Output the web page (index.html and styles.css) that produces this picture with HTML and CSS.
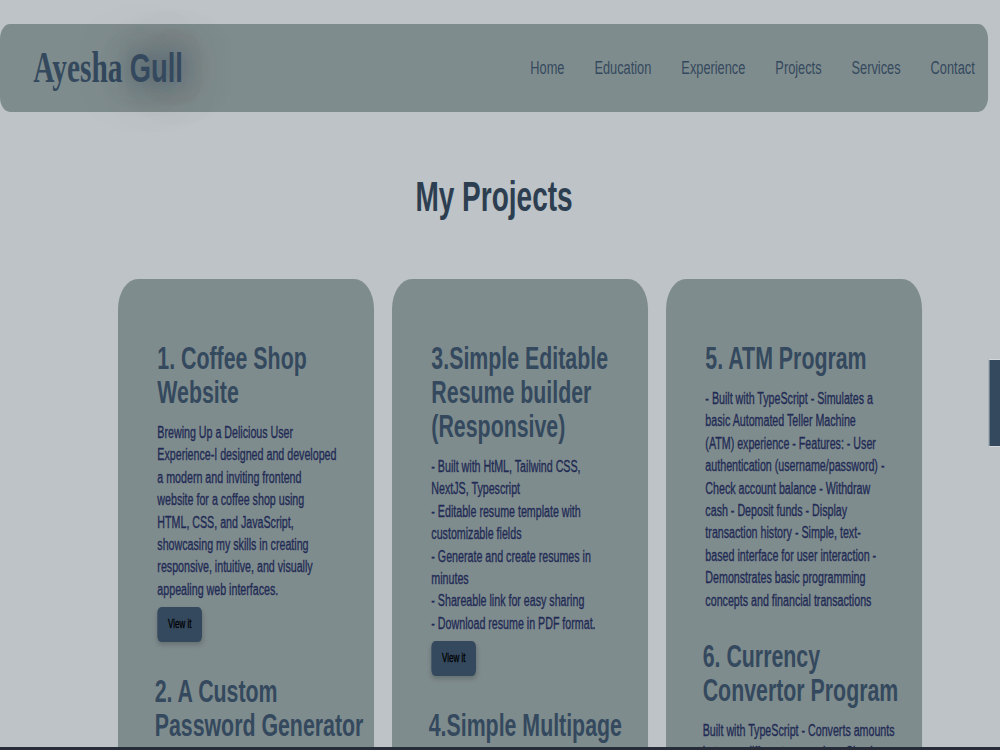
FILE: index.html
```html
<!DOCTYPE html>
<html lang="en">
<head>
    <meta charset="UTF-8">
    <meta name="viewport" content="width=device-width, initial-scale=1.0">
    <title>Ayesha Gull - Projects</title>
    <link rel="stylesheet" href="styles.css">
</head>
<body>
    <div class="page">
        <header class="navbar">
            <div class="logo">Ayesha <span class="logo-bold">Gull</span></div>
            <ul class="nav-links">
                <li><a href="#home">Home</a></li>
                <li><a href="#education">Education</a></li>
                <li><a href="#experience">Experience</a></li>
                <li><a href="#projects">Projects</a></li>
                <li><a href="#services">Services</a></li>
                <li><a href="#contact">Contact</a></li>
            </ul>
        </header>

        <section class="projects" id="projects">
            <h2>My Projects</h2>

            <div class="project-grid">
                <div class="card">
                    <div class="project">
                        <h3>1. Coffee Shop Website</h3>
                        <p>Brewing Up a Delicious User Experience-I designed and developed a modern and inviting frontend website for a coffee shop using HTML, CSS, and JavaScript, showcasing my skills in creating responsive, intuitive, and visually appealing web interfaces.</p>
                        <button class="view-btn">View it</button>
                    </div>
                    <div class="project wide">
                        <h3>2. A Custom Password Generator</h3>
                        <p>Built with TypeScript - Generates strong random passwords - Choose length and character types - Copy to clipboard with one click.</p>
                        <button class="view-btn">View it</button>
                    </div>
                </div>

                <div class="card">
                    <div class="project">
                        <h3>3.Simple Editable Resume builder (Responsive)</h3>
                        <p>- Built with HtML, Tailwind CSS, NextJS, Typescript<br>
                        - Editable resume template with customizable fields<br>
                        - Generate and create resumes in minutes<br>
                        - Shareable link for easy sharing<br>
                        - Download resume in PDF format.</p>
                        <button class="view-btn">View it</button>
                    </div>
                    <div class="project wide">
                        <h3>4.Simple Multipage Navigation Website</h3>
                        <p>- Built with HTML and CSS<br>
                        - Multiple linked pages with a shared navbar</p>
                        <button class="view-btn">View it</button>
                    </div>
                </div>

                <div class="card">
                    <div class="project">
                        <h3>5. ATM Program</h3>
                        <p>- Built with TypeScript - Simulates a basic Automated Teller Machine (ATM) experience - Features: - User authentication (username/password) - Check account balance - Withdraw cash - Deposit funds - Display transaction history - Simple, text-based interface for user interaction - Demonstrates basic programming concepts and financial transactions</p>
                    </div>
                    <div class="project wide">
                        <h3>6. Currency Convertor Program</h3>
                        <p>Built with TypeScript - Converts amounts between different currencies - Simple command line interface.</p>
                    </div>
                </div>
            </div>
        </section>

        <div class="scroll-thumb"></div>
    </div>
    <div class="bottom-bar"></div>
</body>
</html>
```

FILE: styles.css
```css
html, body {
    margin: 0;
    height: 100%;
    overflow: hidden;
}
body {
    background-color: #bdc3c7;
    font-family: "Liberation Sans", Arial, sans-serif;
}
.page {
    position: relative;
    width: 1482px;
    padding: 24px 18px 0 0;
    transform: scaleX(0.6667);
    transform-origin: 0 0;
}
.navbar {
    height: 88px;
    padding: 0 20px 0 50px;
    display: flex;
    justify-content: space-between;
    align-items: center;
    background-color: #7f8c8d;
    border-radius: 15px;
}
.logo {
    font-family: "Liberation Serif", "Times New Roman", serif;
    font-weight: bold;
    font-size: 44px;
    line-height: 48px;
    color: #34495e;
}
.logo-bold {
    font-family: "Liberation Sans", Arial, sans-serif;
    font-size: 41px;
    text-shadow: 0 0 30px rgba(44, 62, 80, 0.7), 0 0 60px rgba(44, 62, 80, 0.5);
}
.nav-links {
    display: flex;
    gap: 45px;
    list-style: none;
    margin: 0;
    padding: 0;
}
.nav-links a {
    color: #34495e;
    text-decoration: none;
    font-size: 19.2px;
}
.projects h2 {
    margin: 61px 0 58px;
    text-align: center;
    font-size: 42px;
    line-height: 48px;
    color: #2c3e50;
}
.project-grid {
    display: grid;
    grid-template-columns: repeat(3, 384px);
    gap: 27px;
    justify-content: center;
    padding-left: 78px;
}
.card {
    background-color: #7f8c8d;
    border-radius: 30px;
    padding: 62px 20px 40px 55px;
}
.project {
    padding: 0 35px 0 4px;
    margin-bottom: 27px;
}
.project.wide {
    padding: 0;
    margin-right: -20px;
}
.project h3 {
    margin: 0 0 13px;
    font-size: 32px;
    line-height: 34px;
    color: #34495e;
}
.project p {
    margin: 0;
    font-size: 16px;
    line-height: 22.4px;
    color: #1f2b55;
    -webkit-text-stroke: 0.35px #1f2b55;
}
.view-btn {
    display: block;
    margin: 6px 0 32px;
    padding: 10px 16px;
    border: none;
    border-radius: 6px;
    background-color: #34495e;
    color: #000;
    font-family: "Liberation Sans", Arial, sans-serif;
    font-size: 12px;
    line-height: 15px;
    -webkit-text-stroke: 0.3px #000;
    box-shadow: 0 3px 6px rgba(0, 0, 0, 0.2);
    cursor: pointer;
}
.scroll-thumb {
    position: absolute;
    top: 359px;
    right: 0;
    width: 16px;
    height: 86px;
    background-color: #34495e;
    border: 1px solid #d3d7da;
    border-right: none;
}
.bottom-bar {
    position: fixed;
    left: 0;
    right: 0;
    bottom: 0;
    height: 3px;
    background-color: #262d38;
}
```
